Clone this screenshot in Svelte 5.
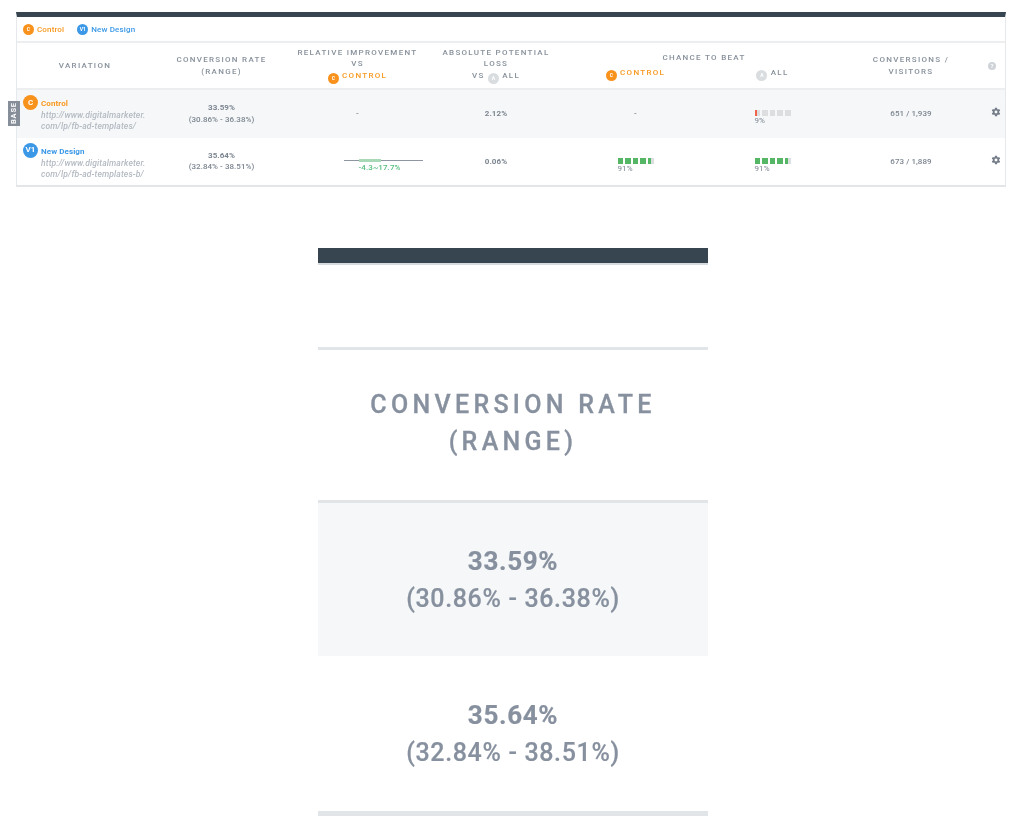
<script>
  const rows = [
    {
      badge: "C", name: "Control", tone: "orange",
      url: ["http://www.digitalmarketer.", "com/lp/fb-ad-templates/"],
      rate: "33.59%", range: "(30.86% - 36.38%)", loss: "2.12%",
      beatControl: null, beatAll: 9, count: "651 / 1,939"
    },
    {
      badge: "V1", name: "New Design", tone: "blue",
      url: ["http://www.digitalmarketer.", "com/lp/fb-ad-templates-b/"],
      rate: "35.64%", range: "(32.84% - 38.51%)", loss: "0.06%",
      beatControl: 91, beatAll: 91, count: "673 / 1,889"
    }
  ];

  // how much of segment i (of 5) a percentage fills
  function fill(pct, i) {
    return Math.max(0, Math.min(1, pct / 20 - i)) * 100;
  }
</script>

{#snippet meter(pct)}
  <div class="meter">
    <div class="segs">
      {#each [0, 1, 2, 3, 4] as i}
        <span class="seg"><i class:low={pct < 50} style="width: {fill(pct, i)}%"></i></span>
      {/each}
    </div>
    <span class="pct">{pct}%</span>
  </div>
{/snippet}

<div class="page">
  <section class="panel">
    <div class="legend">
      <span class="mini orange">C</span><span class="lname c-orange">Control</span>
      <span class="mini blue second">V1</span><span class="lname c-blue">New Design</span>
    </div>

    <div class="grid head">
      <div class="th">VARIATION</div>
      <div class="th">CONVERSION RATE<br />(RANGE)</div>
      <div class="th">RELATIVE IMPROVEMENT<br />VS<br /><span class="mini orange inl">C</span> <span class="c-orange">CONTROL</span></div>
      <div class="th">ABSOLUTE POTENTIAL<br />LOSS<br />VS <span class="mini grey inl">A</span> ALL</div>
      <div class="th beat">
        <div>CHANCE TO BEAT</div>
        <div class="beat-cols">
          <div><span class="mini orange inl">C</span> <span class="c-orange">CONTROL</span></div>
          <div><span class="mini grey inl">A</span> ALL</div>
        </div>
      </div>
      <div class="th">CONVERSIONS /<br />VISITORS</div>
      <div class="th"><span class="help">?</span></div>
    </div>

    {#each rows as row, idx}
      <div class="grid row" class:shaded={idx === 0}>
        <div class="variation">
          {#if idx === 0}<span class="base">BASE</span>{/if}
          <span class="badge {row.tone}">{row.badge}</span>
          <div class="vtext">
            <div class="vname c-{row.tone}">{row.name}</div>
            <div class="url">{row.url[0]}<br />{row.url[1]}</div>
          </div>
        </div>
        <div class="cell"><div><b>{row.rate}</b><br />{row.range}</div></div>
        <div class="cell">
          {#if idx === 0}
            <div>-</div>
          {:else}
            <div class="range">
              <div class="range-line"><span></span></div>
              <div class="range-label">-4.3~17.7%</div>
            </div>
          {/if}
        </div>
        <div class="cell"><b>{row.loss}</b></div>
        <div class="cell">
          {#if row.beatControl === null}<div>-</div>{:else}{@render meter(row.beatControl)}{/if}
        </div>
        <div class="cell">{@render meter(row.beatAll)}</div>
        <div class="cell">{row.count}</div>
        <div class="cell gear-cell">
          <svg viewBox="0 0 24 24" width="10" height="10">
            <path fill="#737c87" d="M19.4 13a7.500 7.500 0 0 0 0-2l2.600-2-2.500-4.300-3 1.200a7.500 7.500 0 0 0-1.700-1L14.500 1.800h-5L9 4.900a7.500 7.500 0 0 0-1.700 1l-3-1.200L1.900 9l2.600 2a7.500 7.500 0 0 0 0 2l-2.600 2 2.500 4.300 3-1.200a7.500 7.500 0 0 0 1.700 1l.5 3.100h5l.5-3.100a7.500 7.500 0 0 0 1.700-1l3 1.200L22 15zM12 15.500a3.500 3.500 0 1 1 0-7 3.500 3.500 0 0 1 0 7z" />
          </svg>
        </div>
      </div>
    {/each}
  </section>

  <section class="zoomed">
    <div class="z-bar"></div>
    <div class="z-empty"></div>
    <div class="z-head">CONVERSION RATE<br />(RANGE)</div>
    <div class="z-row shaded"><b>33.59%</b><br />(30.86% - 36.38%)</div>
    <div class="z-row"><b>35.64%</b><br />(32.84% - 38.51%)</div>
  </section>
</div>

<style>
  :global(body) {
    background: #fff;
    font-family: Roboto, "Liberation Sans", sans-serif;
  }

  .page,
  .page * {
    box-sizing: border-box;
  }

  .page {
    width: 1024px;
    height: 834px;
    padding: 12px 0 0 16px;
    overflow: hidden;
    color: #87909c;
  }

  .panel {
    width: 990px;
    border-top: 5px solid #36454f;
    border-left: 1px solid #e6e9ec;
    border-right: 1px solid #e6e9ec;
    border-bottom: 2px solid #e3e6e9;
    filter: blur(0.4px);
  }

  .legend {
    display: flex;
    align-items: center;
    height: 26px;
    padding-left: 6px;
    border-bottom: 2px solid #eceef0;
    font-size: 8px;
    font-weight: 500;
  }

  .lname {
    margin-left: 3px;
    letter-spacing: 0.15px;
  }

  .second {
    margin-left: 13px;
  }

  .mini {
    display: inline-flex;
    align-items: center;
    justify-content: center;
    width: 11px;
    height: 11px;
    border-radius: 50%;
    color: #fff;
    font-size: 5px;
    font-weight: 700;
    letter-spacing: 0;
  }

  .inl {
    vertical-align: -2px;
  }

  .orange { background: #f8921c; }
  .blue { background: #3b98e6; }
  .grey { background: #d9dde0; }
  .c-orange { color: #f8981f; }
  .c-blue { color: #3b98e6; }

  .grid {
    display: grid;
    grid-template-columns: 136px 137px 135px 142px 137px 137px 140px 24px;
  }

  .head {
    height: 47px;
    grid-template-columns: 136px 137px 135px 142px 274px 140px 24px;
    border-bottom: 2px solid #eceef0;
  }

  .th {
    align-self: center;
    text-align: center;
    font-size: 8px;
    font-weight: 500;
    line-height: 11.5px;
    letter-spacing: 1.3px;
    color: #87909b;
  }

  .beat {
    align-self: start;
    padding-top: 9px;
  }

  .beat-cols {
    display: grid;
    grid-template-columns: 1fr 1fr;
    margin-top: 3px;
  }

  .help {
    display: flex;
    align-items: center;
    justify-content: center;
    width: 8px;
    height: 8px;
    margin-left: 7px;
    border-radius: 50%;
    background: #cfd3d8;
    color: #fff;
    font-size: 6px;
    font-weight: 700;
    letter-spacing: 0;
  }

  .row {
    height: 47.5px;
    font-size: 8px;
    line-height: 11.5px;
  }

  .shaded {
    background: #f5f7f8;
  }

  .cell {
    display: flex;
    align-items: center;
    justify-content: center;
    text-align: center;
    font-weight: 500;
    color: #7c8590;
    letter-spacing: 0.05px;
  }

  .variation {
    position: relative;
    display: flex;
    gap: 3px;
    padding: 5px 0 0 6px;
  }

  .base {
    position: absolute;
    left: -9px;
    top: 11px;
    width: 12px;
    height: 25px;
    background: #858e99;
    color: #fff;
    font-size: 7.5px;
    font-weight: 700;
    line-height: 12px;
    letter-spacing: 0.8px;
    text-align: center;
    writing-mode: vertical-rl;
    transform: rotate(180deg);
  }

  .badge {
    display: flex;
    flex: none;
    align-items: center;
    justify-content: center;
    width: 15px;
    height: 15px;
    border-radius: 50%;
    color: #fff;
    font-size: 8px;
    font-weight: 700;
    letter-spacing: 0;
  }

  .vtext {
    margin-top: 3px;
  }

  .vname {
    font-weight: 700;
    letter-spacing: 0.1px;
    line-height: 12px;
  }

  .url {
    font-size: 8.5px;
    font-style: italic;
    font-weight: 500;
    color: #b4bac2;
    line-height: 11px;
    white-space: nowrap;
    letter-spacing: 0.15px;
  }

  .range {
    width: 79px;
    margin-left: 52px;
    flex: none;
    padding-top: 13px;
  }

  .range-line {
    position: relative;
    height: 1px;
    background: #8e96a1;
  }

  .range-line span {
    position: absolute;
    left: 15px;
    top: -1px;
    width: 22px;
    height: 3px;
    background: #a8d9b6;
  }

  .range-label {
    padding-right: 8px;
    color: #56bd7e;
    letter-spacing: 0.1px;
    line-height: 14px;
  }

  .meter {
    width: 36px;
    margin-top: 9px;
    text-align: left;
  }

  .segs {
    display: flex;
    justify-content: space-between;
    height: 6px;
  }

  .seg {
    width: 5.5px;
    background: #dcdedf;
  }

  .seg i {
    display: block;
    height: 100%;
    background: #55b665;
  }

  .seg i.low {
    background: #f0634a;
  }

  .pct {
    display: block;
    font-weight: 400;
    font-size: 8px;
    line-height: 10px;
    letter-spacing: 0.1px;
  }

  .gear-cell {
    justify-content: flex-start;
    padding: 0 0 3px 10px;
  }

  .gear-cell svg {
    display: block;
  }

  .zoomed {
    width: 390px;
    margin: 61px 0 0 302px;
    text-align: center;
    filter: blur(0.4px);
  }

  .z-bar {
    height: 17px;
    background: #36454f;
    border-bottom: 2px solid #d5dbdf;
  }

  .z-empty {
    height: 85px;
    border-bottom: 3px solid #e2e5e8;
  }

  .z-head {
    height: 153px;
    padding-top: 36px;
    border-bottom: 3px solid #e2e5e8;
    font-size: 25px;
    font-weight: 500;
    line-height: 37px;
    letter-spacing: 4.3px;
    color: #87909e;
    -webkit-text-stroke: 0.3px #87909e;
  }

  .z-row {
    height: 153px;
    padding-top: 40px;
    font-size: 25px;
    line-height: 37px;
    font-weight: 500;
    letter-spacing: 0.65px;
    color: #87909e;
    -webkit-text-stroke: 0.2px #87909e;
  }

  .z-row b {
    font-weight: 700;
    font-size: 26px;
  }

  .z-row:last-child {
    height: 160px;
    padding-top: 41px;
    border-bottom: 5px solid #e2e5e8;
  }
</style>
